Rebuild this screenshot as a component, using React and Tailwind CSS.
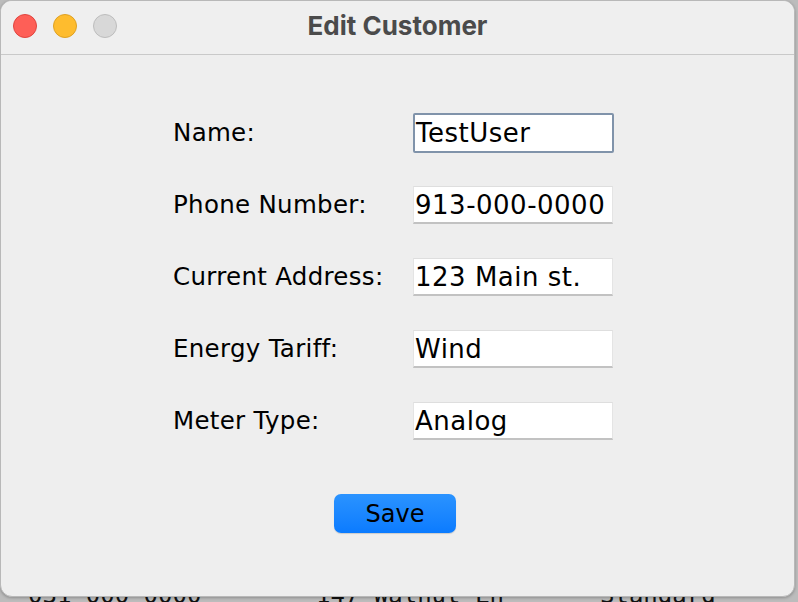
import React from 'react'

const fields = [
  { label: 'Name:', value: 'TestUser', focused: true },
  { label: 'Phone Number:', value: '913-000-0000' },
  { label: 'Current Address:', value: '123 Main st.' },
  { label: 'Energy Tariff:', value: 'Wind' },
  { label: 'Meter Type:', value: 'Analog' },
]

function TrafficLights() {
  return (
    <div className="absolute left-[12px] top-[13px] flex gap-[16px]">
      <span className="block h-[24px] w-[24px] rounded-full border border-[#e0443e] bg-[#fe5f57]" />
      <span className="block h-[24px] w-[24px] rounded-full border border-[#dea123] bg-[#febc2e]" />
      <span className="block h-[24px] w-[24px] rounded-full border border-[#bdbdbd] bg-[#d8d8d8]" />
    </div>
  )
}

function Field({ value, focused }) {
  if (focused) {
    return (
      <div className="flex h-[40px] w-[201px] items-center overflow-hidden whitespace-nowrap rounded-[2px] border-2 border-[#8093aa] bg-white pl-[1px] text-[26px] leading-none tracking-[0.5px] text-black">
        {value}
      </div>
    )
  }
  return (
    <div className="flex h-[38px] w-[200px] items-center overflow-hidden whitespace-nowrap border-x border-t border-b-2 border-x-[#e4e4e4] border-t-[#dedede] border-b-[#c2c2c2] bg-white pl-[1px] text-[26px] leading-none tracking-[0.5px] text-black">
      {value}
    </div>
  )
}

export default function App() {
  return (
    <div className="h-[602px] w-[798px] overflow-hidden bg-[#bcbcbc]">
      <div className="relative h-[597px] w-[795px] overflow-hidden rounded-[12px] border border-[#b8b8b8] bg-[#eeeeee] shadow-[0_1px_3px_rgba(0,0,0,0.25)]">
        {/* Title bar */}
        <div className="relative flex h-[54px] items-center justify-center border-b border-[#c9c9c9] bg-[#efefef] pb-[4px]">
          <TrafficLights />
          <span className="font-['Inter',sans-serif] text-[26px] font-bold text-[#4b4b4b]">
            Edit Customer
          </span>
        </div>

        {/* Form */}
        <div className="flex flex-col pl-[172px] pt-[42px] font-['DejaVu_Sans',sans-serif] text-black">
          {fields.map((f) => (
            <div key={f.label} className="flex h-[72px] items-center">
              <div className="w-[240px] whitespace-nowrap text-[24.5px] tracking-[0.3px]">{f.label}</div>
              <Field value={f.value} focused={f.focused} />
            </div>
          ))}
        </div>

        <div className="mt-[37px] flex justify-center pr-[5px]">
          <button className="h-[39px] w-[122px] rounded-[7px] bg-gradient-to-b from-[#2a93ff] to-[#0a7bff] font-['DejaVu_Sans',sans-serif] text-[24px] leading-none text-black shadow-[0_1px_1px_rgba(0,0,0,0.15)]">
            Save
          </button>
        </div>
      </div>

      {/* Table behind the dialog, mostly hidden */}
      <div className="h-[5px] overflow-hidden">
        <div className="-mt-[14px] flex font-['DejaVu_Sans_Mono',monospace] text-[24px] leading-[24px] text-[#111]">
          <span className="w-[316px] pl-[28px]">031-000-0000</span>
          <span className="w-[284px]">147 Walnut Ln</span>
          <span>Standard</span>
        </div>
      </div>
    </div>
  )
}
